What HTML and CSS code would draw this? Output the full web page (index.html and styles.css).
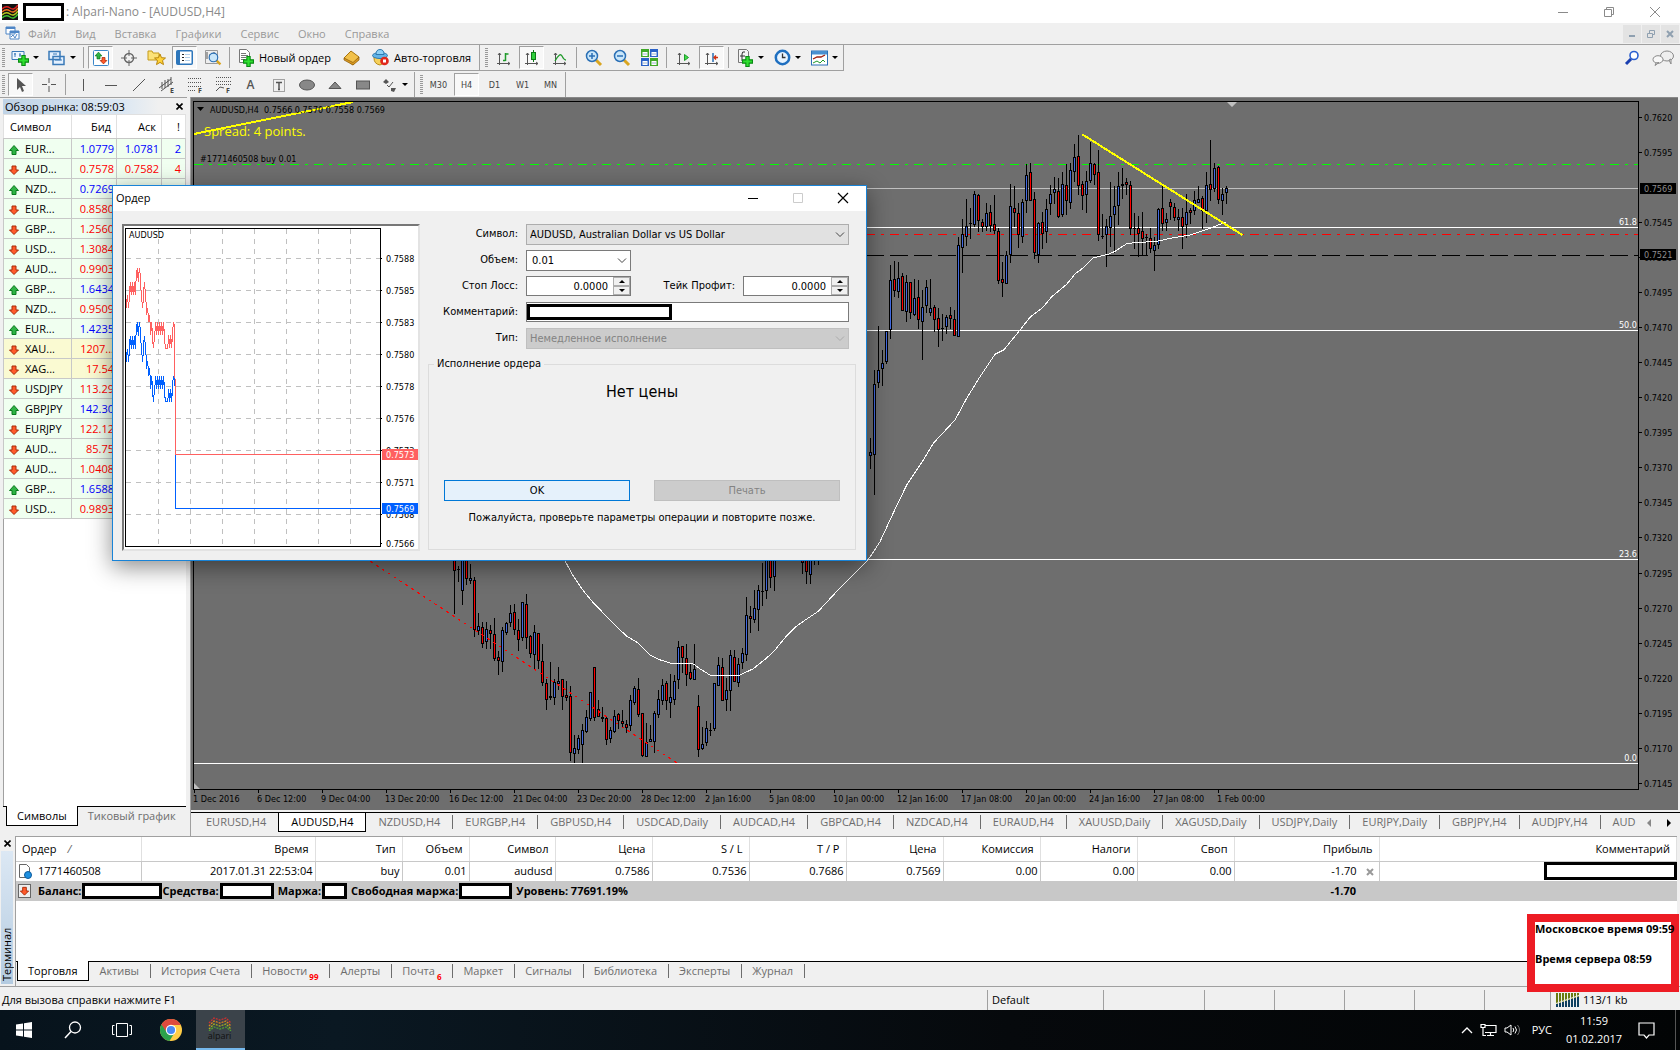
FILE: index.html
```html
<!DOCTYPE html>
<html lang="ru">
<head>
<meta charset="utf-8">
<title>Alpari-Nano - [AUDUSD,H4]</title>
<link rel="stylesheet" href="styles.css">
</head>
<body>
<svg class="sprite" aria-hidden="true">
  <symbol id="up" viewBox="0 0 12 12"><path d="M6 1.500L1.500 6.500H4V10.500H8V6.500H10.500Z" fill="#2fb344" stroke="#0b7a1e"/></symbol>
  <symbol id="down" viewBox="0 0 12 12"><path d="M6 10.500L1.500 6H4V2H8V6H10.500Z" fill="#ff5a2a" stroke="#a82a08"/></symbol>
  <symbol id="plus" viewBox="0 0 10 10"><path d="M3.500.5h3v3h3v3h-3v3h-3v-3h-3v-3h3z" fill="#2fe02f" stroke="#0a8a14"/></symbol>
  <symbol id="axes" viewBox="0 0 16 16"><path d="M3.500 3V15M1 13.500H14M2 5l1.500-2L5 5M12 12l2 1.500L12 15" fill="none" stroke="#555"/></symbol>
  <symbol id="chev" viewBox="0 0 10 6"><path d="M1 .5l4 4 4-4" fill="none" stroke="currentColor"/></symbol>
  <symbol id="lens" viewBox="0 0 18 18"><path d="M11 11l5 5" stroke="#d9a520" stroke-width="3"/><circle cx="7" cy="7" r="5.500" fill="#c9e6fa" stroke="#2a6fb5" stroke-width="1.500"/></symbol>
</svg>

<header class="titlebar">
  <svg width="16" height="16" viewBox="0 0 16 16"><rect width="16" height="16" fill="#111"/><g fill="none" stroke-width="1.500"><path d="M0 5q4-4 8-1t8-3" stroke="#e02020"/><path d="M0 8q4-4 8-1t8-3" stroke="#f07020"/><path d="M0 11q4-4 8-1t8-3" stroke="#b8c820"/><path d="M0 14q4-4 8-1t8-3" stroke="#40c030"/></g></svg>
  <span class="mask mask-title"></span>
  <span class="title">: Alpari-Nano - [AUDUSD,H4]</span>
  <span class="win-controls">
    <button aria-label="Свернуть"><svg width="12" height="12"><path d="M1 6.500h10" stroke="#8a8a8a"/></svg></button>
    <button aria-label="Развернуть"><svg width="12" height="12"><path d="M1.500 3.500h7v7h-7zM3.500 3V1.500h7v7H9" fill="none" stroke="#8a8a8a"/></svg></button>
    <button aria-label="Закрыть"><svg width="12" height="12"><path d="M1 1l10 10M11 1L1 11" stroke="#8a8a8a"/></svg></button>
  </span>
</header>

<nav class="menubar">
  <svg width="15" height="15" viewBox="0 0 15 15"><path d="M1 1h9v7H1zM5 5h9v8H5z" fill="#fff" stroke="#4f86c6"/><path d="M1 2h9M5 6h9" stroke="#4f86c6" stroke-width="2"/><path d="M6 11l2-2 2 3 2-4" fill="none" stroke="#4f86c6"/></svg>
  <a href="#">Файл</a><a href="#">Вид</a><a href="#">Вставка</a><a href="#">Графики</a><a href="#">Сервис</a><a href="#">Окно</a><a href="#">Справка</a>
  <span class="mdi">
    <button aria-label="Свернуть окно"><svg width="8" height="8"><path d="M1 6h6" stroke="#8fa0b0" stroke-width="2"/></svg></button>
    <button aria-label="Восстановить окно"><svg width="8" height="8"><path d="M.5 3.500h5v4h-5zM2.500 3V.5h5v4H6" fill="none" stroke="#8fa0b0"/></svg></button>
    <button aria-label="Закрыть окно"><svg width="8" height="8"><path d="M1 1l6 6M7 1L1 7" stroke="#8fa0b0" stroke-width="2"/></svg></button>
  </span>
</nav>

<div class="toolrow">
  <div class="toolbar">
    <i class="grip"></i>
    <button class="tb drop"><svg width="18" height="18"><path d="M1 2.500h12v8H1z" fill="#eef6ff" stroke="#3a7ab8"/><path d="M4 4v4M3 5h2M9 4v4M8 6h2" stroke="#3a7ab8"/><use href="#plus" x="7" y="6" width="11" height="11"/></svg><b class="car"></b></button>
    <button class="tb drop"><svg width="18" height="18"><path d="M1 2.500h11v8H1zM5 7.500h11v8H5z" fill="#e4f1ff" stroke="#3a7ab8" stroke-width="1.500"/><path d="M7 11h7M5 5h4" stroke="#3a7ab8"/></svg><b class="car"></b></button>
    <i class="sep"></i>
    <button class="tb on"><svg width="16" height="16"><rect x=".5" y=".5" width="15" height="15" rx="1" fill="#fff" stroke="#3a86c8"/><use href="#up" x="1" y="1" width="9" height="9"/><use href="#down" x="6" y="6" width="9" height="9"/></svg></button>
    <button class="tb"><svg width="16" height="16"><circle cx="8" cy="8" r="4.500" fill="none" stroke="#666" stroke-width="1.500"/><path d="M8 0v6M8 10v6M0 8h6M10 8h6" stroke="#666"/></svg></button>
    <button class="tb"><svg width="19" height="17"><path d="M1 2h4l1 2h6v7H1z" fill="#fce277" stroke="#c49a1a"/><path d="M13 5l1.500 3.700 4 .3-3 2.600 1 4-3.500-2.200L9.500 15.600l1-4-3-2.600 4-.3z" fill="#ffd23a" stroke="#b8860b"/></svg></button>
    <button class="tb on"><svg width="17" height="16"><rect x=".75" y=".75" width="15.500" height="13.500" rx="1" fill="#fff" stroke="#2d76bb" stroke-width="1.500"/><rect x="1" y="1" width="3" height="13" fill="#2d76bb"/><path d="M6 4.500h2M6 7.500h2M6 10.500h2" stroke="#222"/><path d="M9 4.500h5M9 7.500h5M9 10.500h5" stroke="#b4d0ea"/></svg></button>
    <button class="tb"><svg width="18" height="18"><path d="M1.500 1.500h12v13h-12z" fill="#eee" stroke="#999"/><path d="M3 3v7M6 5v5M10 3v3" stroke="#555"/><use href="#lens" x="4" y="3" width="14" height="14"/></svg></button>
    <i class="sep"></i>
    <button class="tb wide"><svg width="17" height="18"><path d="M1.500.5h7l3 3v10h-10z" fill="#fff" stroke="#777"/><path d="M3 4.500h5M3 6.500h7M3 8.500h5M3 10.500h4" stroke="#777"/><use href="#plus" x="5" y="7" width="11" height="11"/></svg>Новый ордер</button>
    <button class="tb"><svg width="18" height="16"><path d="M1 8l7-7 8 6-6 8z" fill="#f2c14a" stroke="#a8740c"/><path d="M1 8l9 4.500 6-5.500v3l-6 5-9-5z" fill="#d99a22" stroke="#8a5a0a" stroke-width=".7"/></svg></button>
    <button class="tb wide"><svg width="18" height="17"><path d="M2 9q0 6 6 7l6-3V8H2z" fill="#f5d05a" stroke="#b88c1a"/><ellipse cx="8" cy="6.500" rx="7.500" ry="3" fill="#62b4e8" stroke="#2d79b0"/><path d="M4 5.500q0-5 4-5t4 5z" fill="#8fd0f5" stroke="#2d79b0"/><circle cx="12.500" cy="12" r="4.300" fill="#e0281c"/><rect x="11" y="10.500" width="3" height="3" fill="#fff"/></svg>Авто-торговля</button>
  </div>
  <div class="toolbar">
    <i class="grip"></i>
    <button class="tb"><svg width="16" height="16"><use href="#axes" width="16" height="16"/><path d="M9.500 3v8M9.500 4h3M7 10.500h2.500" stroke="#1f9a2a" stroke-width="1.500"/></svg></button>
    <button class="tb on"><svg width="16" height="16"><use href="#axes" width="16" height="16"/><path d="M9.500 0v12" stroke="#0e7a18"/><rect x="7.500" y="2.500" width="4" height="7" fill="#2fd03c" stroke="#0e7a18"/></svg></button>
    <button class="tb"><svg width="16" height="16"><use href="#axes" width="16" height="16"/><path d="M3 11q5-9 7-5t4 4" fill="none" stroke="#1f9a2a" stroke-width="1.300"/></svg></button>
    <i class="sep"></i>
    <button class="tb"><svg width="18" height="18"><use href="#lens" width="18" height="18"/><path d="M4 7h6M7 4v6" stroke="#2a6fb5" stroke-width="1.500"/></svg></button>
    <button class="tb"><svg width="18" height="18"><use href="#lens" width="18" height="18"/><path d="M4 7h6" stroke="#2a6fb5" stroke-width="1.500"/></svg></button>
    <button class="tb"><svg width="17" height="17"><path d="M0 0h8v8H0zM9 9h8v8H9z" fill="#3fa828"/><path d="M9 0h8v8H9zM0 9h8v8H0z" fill="#2a62c8"/><path d="M1.500 3h5v4h-5zM10.500 3h5v4h-5zM1.500 12h5v4h-5zM10.500 12h5v4h-5z" fill="#fff"/><path d="M2 5h4M11 5h4M2 14h4M11 14h4" stroke="#9cb4d0"/></svg></button>
    <i class="sep"></i>
    <button class="tb"><svg width="16" height="16"><use href="#axes" width="16" height="16"/><path d="M8.500 4.500v6l4-3z" fill="#3fe04a" stroke="#1f9a2a"/></svg></button>
    <button class="tb on"><svg width="16" height="16"><use href="#axes" width="16" height="16"/><path d="M9 3v9" stroke="#2a6fb5" stroke-width="1.500"/><path d="M14 7.500h-4M12 5.500l-2 2 2 2" fill="none" stroke="#d03010" stroke-width="1.300"/></svg></button>
    <i class="sep"></i>
    <button class="tb drop"><svg width="17" height="18"><path d="M1.500.5h8l2 2v11h-10z" fill="#f4f4f4" stroke="#777"/><path d="M8 3q-3-1-3 2v7M3 7h5" fill="none" stroke="#333"/><use href="#plus" x="5" y="7" width="11" height="11"/></svg><b class="car"></b></button>
    <button class="tb drop"><svg width="17" height="17"><circle cx="8.500" cy="8.500" r="6.700" fill="#e8f4ff" stroke="#1e6fc0" stroke-width="2.500"/><path d="M8.500 4.500v4h3" fill="none" stroke="#333" stroke-width="1.300"/></svg><b class="car"></b></button>
    <button class="tb drop"><svg width="17" height="16"><rect x=".5" y="1" width="16" height="14" fill="#fff" stroke="#2a6fb5"/><rect x="1" y="1" width="15" height="3.500" fill="#4a90d0"/><path d="M2 9l4-2h4l4-2" fill="none" stroke="#a02010" stroke-width="1.300"/><path d="M2 13l4-2 3 2 3-3 2 2" fill="none" stroke="#1f9a2a"/></svg><b class="car"></b></button>
  </div>
  <div class="right-tools">
    <button aria-label="Поиск"><svg width="16" height="16"><circle cx="10" cy="5.500" r="4" fill="#fff" stroke="#2a5fd0" stroke-width="1.600"/><path d="M7 9l-5 5" stroke="#1a3fb0" stroke-width="3"/></svg></button>
    <button aria-label="Чат"><svg width="22" height="16"><ellipse cx="15" cy="6" rx="6.500" ry="5" fill="#eee" stroke="#888"/><path d="M17 10l2 4 0-5z" fill="#eee" stroke="#888"/><ellipse cx="6" cy="9.500" rx="5" ry="3.800" fill="#f8f8f8" stroke="#888"/><path d="M4 13l-1 2.500 4-3z" fill="#f8f8f8" stroke="#888"/></svg></button>
  </div>
</div>

<div class="toolrow second">
  <div class="toolbar">
    <i class="grip"></i>
    <button class="tb on"><svg width="14" height="16"><path d="M3 1v12l3-3 2 5 2-1-2-5h4z" fill="#555"/></svg></button>
    <button class="tb"><svg width="16" height="16"><path d="M8 1v5M8 9v6M1 7.500h5M10 7.500h5" stroke="#555"/></svg></button>
    <i class="sep"></i>
    <button class="tb"><svg width="16" height="16"><path d="M8.500 2v12" stroke="#555"/></svg></button>
    <button class="tb"><svg width="16" height="16"><path d="M2 8.500h12" stroke="#555"/></svg></button>
    <button class="tb"><svg width="16" height="16"><path d="M2 14L14 2" stroke="#555"/></svg></button>
    <button class="tb"><svg width="18" height="18"><path d="M1 12L13 3M3 15L15 6M4 6v7M7 4v8M10 3v8M13 1v8" stroke="#555"/><text x="12" y="17">E</text></svg></button>
    <button class="tb"><svg width="18" height="18"><path d="M2 2.500h13M2 6.500h13M2 10.500h13M2 14.500h8" stroke="#555" stroke-dasharray="1 1"/><text x="12" y="17">F</text></svg></button>
    <button class="tb"><svg width="18" height="18"><path d="M2 1.500h15M2 5.500h15M2 8.500h15" stroke="#555" stroke-dasharray="1 1"/><path d="M2 15l4-4 4 1" fill="none" stroke="#555"/><text x="12" y="17">F</text></svg></button>
    <button class="tb letter">A</button>
    <button class="tb"><svg width="16" height="16"><rect x="2.500" y="2.500" width="11" height="12" fill="none" stroke="#555" stroke-dasharray="1 1"/><path d="M5 5.500h6M8 5v7M7 12.500h2" stroke="#555" stroke-width="1.500"/></svg></button>
    <button class="tb"><svg width="16" height="16"><ellipse cx="8" cy="8" rx="7.500" ry="5" fill="#888" stroke="#555"/></svg></button>
    <button class="tb"><svg width="16" height="16"><path d="M2 11.500L8 5l6 6.500z" fill="#888" stroke="#555"/></svg></button>
    <button class="tb"><svg width="16" height="16"><rect x="1.500" y="4" width="13" height="8" fill="#888" stroke="#555"/></svg></button>
    <button class="tb drop"><svg width="16" height="16"><path d="M1 5l3-3 3 3-3 2zM9 11l5 0-2 4-3-1z" fill="#555"/><path d="M5 8l2 2 4-5" fill="none" stroke="#555"/></svg><b class="car"></b></button>
  </div>
  <div class="toolbar periods">
    <i class="grip"></i>
    <button class="tb">M30</button><button class="tb on">H4</button><button class="tb">D1</button><button class="tb">W1</button><button class="tb">MN</button>
  </div>
</div>

<main class="main">
  <aside class="market">
    <div class="panel-title"><span>Обзор рынка: 08:59:03</span><button aria-label="Закрыть панель"><svg width="7" height="7"><path d="M.5.5l6 6M6.500.5l-6 6" stroke="#000" stroke-width="1.600"/></svg></button></div>
    <table class="quotes">
      <colgroup><col class="q-sym"><col class="q-num"><col class="q-num"><col></colgroup>
      <thead><tr><th class="l">Символ</th><th>Бид</th><th>Аск</th><th>!</th></tr></thead>
      <tbody>
      <tr class="u"><td class="l"><svg><use href="#up"/></svg>EUR...</td><td>1.0779</td><td>1.0781</td><td>2</td></tr>
      <tr class="d"><td class="l"><svg><use href="#down"/></svg>AUD...</td><td>0.7578</td><td>0.7582</td><td>4</td></tr>
      <tr class="u"><td class="l"><svg><use href="#up"/></svg>NZD...</td><td>0.7269</td><td>0.7273</td><td>4</td></tr>
      <tr class="d"><td class="l"><svg><use href="#down"/></svg>EUR...</td><td>0.8580</td><td></td><td></td></tr>
      <tr class="d"><td class="l"><svg><use href="#down"/></svg>GBP...</td><td>1.2560</td><td></td><td></td></tr>
      <tr class="d"><td class="l"><svg><use href="#down"/></svg>USD...</td><td>1.3084</td><td></td><td></td></tr>
      <tr class="d"><td class="l"><svg><use href="#down"/></svg>AUD...</td><td>0.9903</td><td></td><td></td></tr>
      <tr class="u"><td class="l"><svg><use href="#up"/></svg>GBP...</td><td>1.6434</td><td></td><td></td></tr>
      <tr class="d"><td class="l"><svg><use href="#down"/></svg>NZD...</td><td>0.9509</td><td></td><td></td></tr>
      <tr class="u"><td class="l"><svg><use href="#up"/></svg>EUR...</td><td>1.4235</td><td></td><td></td></tr>
      <tr class="d metal"><td class="l"><svg><use href="#down"/></svg>XAU...</td><td>1207...</td><td></td><td></td></tr>
      <tr class="d metal"><td class="l"><svg><use href="#down"/></svg>XAG...</td><td>17.54</td><td></td><td></td></tr>
      <tr class="d"><td class="l"><svg><use href="#down"/></svg>USDJPY</td><td>113.29</td><td></td><td></td></tr>
      <tr class="u"><td class="l"><svg><use href="#up"/></svg>GBPJPY</td><td>142.30</td><td></td><td></td></tr>
      <tr class="d"><td class="l"><svg><use href="#down"/></svg>EURJPY</td><td>122.12</td><td></td><td></td></tr>
      <tr class="d"><td class="l"><svg><use href="#down"/></svg>AUD...</td><td>85.75</td><td></td><td></td></tr>
      <tr class="d"><td class="l"><svg><use href="#down"/></svg>AUD...</td><td>1.0408</td><td></td><td></td></tr>
      <tr class="u"><td class="l"><svg><use href="#up"/></svg>GBP...</td><td>1.6588</td><td></td><td></td></tr>
      <tr class="d"><td class="l"><svg><use href="#down"/></svg>USD...</td><td>0.9893</td><td></td><td></td></tr>
      </tbody>
    </table>
    <div class="filler"></div>
    <div class="tabs market-tabs"><button class="tab active">Символы</button><button class="tab">Тиковый график</button></div>
  </aside>
  <section class="workspace">
    <div class="chart">
      <svg class="plot" id="plot"></svg>
      <svg class="prices" id="prices"></svg>
      <svg class="times" id="times"></svg>
    </div>
    <div class="tabs chart-tabs">
      <button class="tab">EURUSD,H4</button><button class="tab active">AUDUSD,H4</button><button class="tab">NZDUSD,H4</button><button class="tab">EURGBP,H4</button><button class="tab">GBPUSD,H4</button><button class="tab">USDCAD,Daily</button><button class="tab">AUDCAD,H4</button><button class="tab">GBPCAD,H4</button><button class="tab">NZDCAD,H4</button><button class="tab">EURAUD,H4</button><button class="tab">XAUUSD,Daily</button><button class="tab">XAGUSD,Daily</button><button class="tab">USDJPY,Daily</button><button class="tab">EURJPY,Daily</button><button class="tab">GBPJPY,H4</button><button class="tab">AUDJPY,H4</button><button class="tab">AUD</button>
      <span class="scroll"><svg width="5" height="8"><path d="M4 0v8L0 4z" fill="#888"/></svg><svg width="5" height="8"><path d="M1 0v8l4-4z"/></svg></span>
    </div>
  </section>
</main>

<section class="terminal">
  <div class="strip"><button aria-label="Закрыть терминал"><svg width="7" height="7"><path d="M.5.5l6 6M6.500.5l-6 6" stroke="#000" stroke-width="1.600"/></svg></button><span>Терминал</span></div>
  <div class="term-body">
    <table class="orders">
      <colgroup><col class="c125"><col class="c174"><col class="c87"><col class="c67"><col class="c86"><col class="c97"><col class="c97"><col class="c97"><col class="c97"><col class="c97"><col class="c97"><col class="c97"><col class="c145"><col></colgroup>
      <thead><tr><th class="l">Ордер <i class="slash">/</i></th><th>Время</th><th>Тип</th><th>Объем</th><th>Символ</th><th>Цена</th><th>S / L</th><th>T / P</th><th>Цена</th><th>Комиссия</th><th>Налоги</th><th>Своп</th><th>Прибыль</th><th>Комментарий</th></tr></thead>
      <tbody>
        <tr><td class="l"><svg width="14" height="16"><path d="M1.500 1.500h7l3 3v10h-10z" fill="#fff" stroke="#666"/><circle cx="10" cy="12" r="3.500" fill="#1e90e0" stroke="#0c5a9c"/></svg>1771460508</td><td>2017.01.31 22:53:04</td><td>buy</td><td>0.01</td><td>audusd</td><td>0.7586</td><td>0.7536</td><td>0.7686</td><td>0.7569</td><td>0.00</td><td>0.00</td><td>0.00</td><td class="profit">-1.70 <button aria-label="Закрыть ордер"><svg width="8" height="8"><path d="M1 1l6 6M7 1L1 7" stroke="#999" stroke-width="2"/></svg></button></td><td class="comment"><span class="mask"></span></td></tr>
        <tr class="total"><td colspan="12"><div class="sum"><svg width="13" height="15"><rect x=".5" y=".5" width="12" height="13" fill="#eee" stroke="#666"/><use href="#down" x="1" y="1" width="11" height="12"/></svg><span>Баланс:</span><i class="mask m80"></i><span>Средства:</span><i class="mask m54"></i><span class="gap">Маржа:</span><i class="mask m25"></i><span class="gap">Свободная маржа:</span><i class="mask m53"></i><span class="gap">Уровень: 77691.19%</span></div></td><td class="profit">-1.70</td><td></td></tr>
      </tbody>
    </table>
    <div class="tabs term-tabs">
      <button class="tab active">Торговля</button><button class="tab">Активы</button><button class="tab">История Счета</button><button class="tab">Новости<sub>99</sub></button><button class="tab">Алерты</button><button class="tab">Почта<sub>6</sub></button><button class="tab">Маркет</button><button class="tab">Сигналы</button><button class="tab">Библиотека</button><button class="tab">Эксперты</button><button class="tab">Журнал</button>
    </div>
  </div>
</section>

<footer class="status">
  <span class="hint">Для вызова справки нажмите F1</span><span class="s116">Default</span><span class="s101"></span><span class="s70"></span><span class="s70"></span><span class="s70"></span><span class="s70"></span><span class="s66"></span>
  <span class="net"><svg width="23" height="14"><path d="M1 0v14M4 0v14M7 0v14M10 0v14M13 0v14M16 0v14M19 0v14M22 0v14" stroke="#6b7a10" stroke-width="2"/><path d="M1 11v3M4 10v4M7 9v5M10 8v6M13 7v7M16 6v8M19 5v9M22 4v10" stroke="#0f4060" stroke-width="2"/><path d="M0 10.500L23 2.500" stroke="#f0f0f0"/></svg>113/1 kb</span>
</footer>

<div class="taskbar">
  <button aria-label="Пуск"><svg width="16" height="16"><path d="M0 2.500L7 1.500V7.500H0zM8 1.300L16 0V7.500H8zM0 8.500h7v6L0 13.500zM8 8.500h8V16L8 14.700z" fill="#fff"/></svg></button>
  <button aria-label="Поиск"><svg width="18" height="18"><circle cx="11" cy="6.500" r="5.500" fill="none" stroke="#fff" stroke-width="1.300"/><path d="M7 10.500L1 17" stroke="#fff" stroke-width="1.500"/></svg></button>
  <button aria-label="Представление задач"><svg width="20" height="16"><path d="M4.500 1.500h11v13h-11zM2.500 3.500h-2v9h2M17.500 3.500h2v9h-2" fill="none" stroke="#fff"/></svg></button>
  <button aria-label="Chrome"><svg width="22" height="22" viewBox="0 0 22 22"><circle cx="11" cy="11" r="11" fill="#ffcd46"/><path d="M11 11L1.500 5.500A11 11 0 0 0 9.500 22L15 13z" fill="#2ba24c"/><path d="M11 6h9.800A11 11 0 0 0 1.500 5.500L6.500 13z" fill="#dd4b3e"/><circle cx="11" cy="11" r="5.200" fill="#fff"/><circle cx="11" cy="11" r="4.100" fill="#4a8af4"/></svg></button>
  <button class="running"><svg width="24" height="14"><g fill="none" stroke-width="1.300" stroke-dasharray="2 1"><path d="M1 6L6 1l6 2 6-2 5 5" stroke="#d03030"/><path d="M1 9l5-5 6 2 6-2 5 5" stroke="#e08020"/><path d="M1 12l5-5 6 2 6-2 5 5" stroke="#a8b020"/><path d="M1 14l5-4 6 2 6-2 5 4" stroke="#50a030"/></g></svg><span>alpari</span></button>
  <div class="tray">
    <svg width="12" height="8"><path d="M1 7l5-5 5 5" fill="none" stroke="#fff" stroke-width="1.300"/></svg>
    <svg width="17" height="14"><path d="M5 2.500h11v7H5M10.500 10v2M7 12.500h7M1 1.500h4v3H1zM3 5v7.500h3" fill="none" stroke="#fff" stroke-width="1.200"/></svg>
    <svg width="17" height="14"><path d="M1 5h2l4-3v10L3 9H1z" fill="none" stroke="#fff"/><path d="M9 5q1.500 2 0 4M11 3.500q3 3.500 0 7" fill="none" stroke="#fff"/><path d="M13.500 2q4 5 0 10" fill="none" stroke="#777"/></svg>
    <span class="lang">РУС</span>
    <span class="clock">11:59<br>01.02.2017</span>
    <svg width="17" height="17"><path d="M1 1h15v12H11l-2.500 3L6 13H1z" fill="none" stroke="#fff" stroke-width="1.200"/></svg>
    <i class="desk"></i>
  </div>
</div>

<div class="note"><p>Московское время 09:59</p><p>Время сервера 08:59</p></div>

<section class="dialog" role="dialog" aria-label="Ордер">
  <header><span>Ордер</span>
    <span class="dlg-controls"><button aria-label="Свернуть"><svg width="12" height="12"><path d="M1 6.500h10" stroke="#000"/></svg></button><button aria-label="Развернуть" disabled><svg width="12" height="12"><path d="M1.500 1.500h9v9h-9z" fill="none" stroke="#ccc"/></svg></button><button aria-label="Закрыть"><svg width="12" height="12"><path d="M1 1l10 10M11 1L1 11" stroke="#000" stroke-width="1.200"/></svg></button></span>
  </header>
  <div class="dlg-body">
    <div class="tick"><svg id="tick" width="294" height="323"></svg></div>
    <form class="form">
      <label for="sym">Символ:</label><span class="combo full"><select id="sym"><option>AUDUSD, Australian Dollar vs US Dollar</option></select><svg><use href="#chev"/></svg></span>
      <label for="vol">Объем:</label><span class="combo short white"><select id="vol"><option>0.01</option></select><svg><use href="#chev"/></svg></span>
      <label for="sl">Стоп Лосс:</label><span class="spin"><input id="sl" value="0.0000"><span class="arrows"><button type="button" aria-label="Больше"><i class="tri up"></i></button><button type="button" aria-label="Меньше"><i class="tri"></i></button></span></span><label for="tp" class="second-label">Тейк Профит:</label><span class="spin"><input id="tp" value="0.0000"><span class="arrows"><button type="button" aria-label="Больше"><i class="tri up"></i></button><button type="button" aria-label="Меньше"><i class="tri"></i></button></span></span>
      <label for="com">Комментарий:</label><span class="field full"><i class="mask"></i><input id="com"></span>
      <label for="typ">Тип:</label><span class="combo full"><select id="typ" disabled><option>Немедленное исполнение</option></select><svg><use href="#chev"/></svg></span>
      <fieldset><legend>Исполнение ордера</legend>
        <p class="big">Нет цены</p>
        <div class="actions"><button type="button" class="ok">OK</button><button type="button" disabled>Печать</button></div>
        <p>Пожалуйста, проверьте параметры операции и повторите позже.</p>
      </fieldset>
    </form>
  </div>
</section>
<script src="chart.js"></script>
</body>
</html>
```
FILE: styles.css
```css
* { box-sizing: border-box; }
body {
  margin: 0;
  min-height: 100vh;
  display: flex;
  flex-direction: column;
  position: relative;
  overflow: hidden;
  background: #f0f0f0;
  color: #000;
  font: 11px/14px "Open Sans", "Noto Sans", sans-serif;
}
button { border: 0; padding: 0; margin: 0; background: none; font: inherit; color: inherit; display: flex; align-items: center; justify-content: center; }
a { color: inherit; text-decoration: none; }
p { margin: 0; }
svg { display: block; flex: none; }
table { border-collapse: collapse; table-layout: fixed; width: 100%; }
.sprite { position: absolute; width: 0; height: 0; }
.mask { display: block; flex: none; background: #fff; border: 3px solid #000; height: 16px; }

.titlebar { height: 23px; background: #fff; display: flex; align-items: center; padding: 1px 19px 0 2px; }
.mask-title { width: 41px; height: 18px; margin-left: 5px; }
.title { color: #8a8a8a; font-size: 12px; margin-left: 2px; }
.win-controls { margin-left: auto; display: flex; gap: 34px; }

.menubar { height: 21px; display: flex; align-items: center; gap: 19px; padding: 0 1px 0 5px; color: #999; }
.menubar svg + a { margin-left: -11px; }
.mdi { margin-left: auto; display: flex; gap: 1px; }
.mdi button { width: 18px; height: 18px; background: #e3e3e3; }

.toolrow { height: 27px; border-top: 1px solid #a0a0a0; display: flex; }
.toolrow.second { height: 26px; border-top: 0; padding-top: 1px; }
.toolbar { display: flex; align-items: center; gap: 3px; padding: 0 2px; border-right: 1px solid #a0a0a0; border-bottom: 1px solid #a0a0a0; }
.toolbar + .toolbar { padding-left: 5px; }
.second .toolbar { border-bottom: 0; }
.grip { width: 3px; height: 19px; background: repeating-linear-gradient(#999 0 1px, #f0f0f0 1px 2px); }
.sep { width: 1px; height: 21px; background: #a0a0a0; margin: 0 1px; }
.tb { width: 25px; height: 23px; flex: none; gap: 3px; }
.tb.drop { width: 34px; gap: 4px; }
.tb.wide { width: auto; padding: 0 6px 0 4px; gap: 4px; }
.tb.on { background: #f8f8f8; border: 1px solid; border-color: #a0a0a0 #fff #fff #a0a0a0; }
.tb.letter { font-size: 12px; color: #555; font-weight: 600; }
.tb text { font-size: 7px; font-weight: 700; fill: #444; }
.car { border: 3px solid transparent; border-top: 3px solid #000; border-bottom: 0; }
.periods { font-size: 9px; color: #444; font-family: "DejaVu Sans Condensed", sans-serif; }
.right-tools { margin-left: auto; display: flex; align-items: center; gap: 12px; padding-right: 6px; }

.main { flex: 1; display: flex; }
.market { width: 187px; flex: none; display: flex; flex-direction: column; border-top: 1px solid #a0a0a0; margin-right: 3px; padding: 1px 1px 10px 3px; }
.panel-title { height: 15px; display: flex; align-items: center; justify-content: space-between; padding: 0 3px 0 2px; background: linear-gradient(90deg, #bfd3e6, #dbe7f3 65%, #f0f0f0 85%); }
.quotes { background: #fff; flex: none; }
.quotes th { height: 24px; border: 1px solid #e0e0e0; border-bottom-color: #c8c8c8; font-weight: 400; text-align: right; padding: 0 5px; }
.quotes .l { text-align: left; }
.quotes th.l { padding-left: 6px; }
.quotes td { height: 20px; border: 1px solid #c8c8c8; text-align: right; padding: 0 2px; background: #f0fff0; overflow: hidden; white-space: nowrap; }
.quotes td:last-child { padding-right: 4px; }
.quotes td svg { display: inline-block; width: 12px; height: 12px; margin: 0 5px 0 1px; vertical-align: -3px; }
.quotes td.l { padding-left: 3px; color: #000; }
.quotes .u td:not(.l) { color: #00f; }
.quotes .d td:not(.l) { color: #f00; }
.quotes .metal td { background: #fafad2; }
.q-sym { width: 68px; }
.q-num { width: 45px; }
.filler { flex: 1; background: #fff; border-left: 1px solid #a0a0a0; }

.tabs { display: flex; height: 20px; border-top: 1px solid #000; background: #f0f0f0; }
.tab { color: #6d6d6d; white-space: nowrap; flex: none; }
.tab.active { background: #fff; color: #000; border: 1px solid #000; border-top: 0; margin-top: -1px; padding-top: 1px; }
.tab:not(.active) { border-right: 1px solid #6d6d6d; height: 14px; margin-top: 2px; }
.market-tabs .tab { padding: 0 10px; border-right: 0; }
.market-tabs .tab.active { margin-left: 3px; border-right: 1px solid #000; }

.workspace { flex: 1; min-width: 0; display: flex; flex-direction: column; border-left: 1px solid #a0a0a0; }
.chart { flex: 1; display: grid; grid-template-columns: minmax(0, 1fr) 39px; grid-template-rows: minmax(0, 1fr) 20px; background: #6e6e6e; border-top: 1px solid #888; padding: 3px 0 0 2px; margin-right: 2px; font: 9px/11px "DejaVu Sans Condensed", sans-serif; }
.plot { width: 100%; height: 100%; border: 1px solid #000; }
.prices, .times { width: 100%; height: 100%; overflow: visible; }
.times { grid-column: 1 / 3; }
.chart-tabs { margin-top: 2px; height: 24px; border-bottom: 4px solid #f0f0f0; overflow: hidden; }
.chart-tabs .tab { padding: 0 12px; }
.chart-tabs .tab:first-child { border-right: 0; padding-left: 15px; }
.chart-tabs .tab:nth-last-child(2) { border-right: 0; padding-right: 0; }
.scroll { margin-left: auto; display: flex; gap: 14px; align-items: center; padding-right: 9px; }

.terminal { display: flex; height: 150px; }
.strip { width: 15px; display: flex; flex-direction: column; align-items: center; padding: 4px 2px 2px 1px; gap: 4px; }
.strip span { flex: 1; width: 100%; writing-mode: vertical-rl; transform: rotate(180deg); background: linear-gradient(#b4cbe0, #dce8f4); padding-top: 3px; display: flex; align-items: center; line-height: 12px; }
.term-body { flex: 1; min-width: 0; margin-right: 3px; border: 1px solid #a0a0a0; border-bottom: 0; border-right: 0; background: #fff; display: flex; flex-direction: column; }
.orders th { height: 24px; font-weight: 400; text-align: right; padding: 0 6px; border-right: 1px solid #e0e0e0; border-bottom: 1px solid #c8c8c8; }
.orders td { height: 20px; text-align: right; padding: 0 2px; border-right: 1px solid #c8c8c8; white-space: nowrap; }
.orders .l { text-align: left; }
.slash { color: #666; margin-left: 8px; }
.orders td.l svg { display: inline-block; vertical-align: -4px; margin-right: 6px; }
.orders .profit { padding-right: 22px; position: relative; }
.profit button { position: absolute; right: 5px; top: 6px; }
.orders .comment { padding: 0; border: 0; }
.comment .mask { width: 133px; height: 18px; margin-left: auto; }
.orders .total td { background: #c8c8c8; border: 0; font-weight: 700; }
.orders .total td.profit { padding-right: 23px; }
.sum { display: flex; align-items: center; }
.sum svg { margin-right: 7px; }
.sum .gap { margin-left: 4px; }
.sum span + .mask { margin-left: 1px; }
.m80 { width: 80px; } .m54 { width: 54px; } .m25 { width: 25px; } .m53 { width: 53px; }
.c125 { width: 125px; } .c174 { width: 174px; } .c87 { width: 87px; } .c67 { width: 67px; } .c86 { width: 86px; } .c97 { width: 97px; } .c145 { width: 145px; }
.term-tabs { margin-top: auto; height: 25px; border-bottom: 5px solid #f0f0f0; padding-left: 1px; }
.term-tabs .tab { padding: 0 11px 0 10px; }
sub { color: #f00; font-size: 8px; line-height: 8px; font-weight: 700; align-self: flex-end; margin: 0 0 -3px 2px; }

.status { height: 24px; border-top: 1px solid #a0a0a0; display: flex; padding-top: 3px; }
.status span { border-left: 1px solid #a0a0a0; padding: 3px 4px 0; }
.status .hint { flex: 1; border: 0; padding-left: 2px; }
.s116 { width: 116px; } .s101 { width: 101px; } .s70 { width: 70px; } .s66 { width: 66px; }
.status .net { width: 130px; display: flex; gap: 4px; padding-left: 5px; }

.taskbar { height: 40px; background: linear-gradient(90deg, #07131c, #0a1822 20%, #06090c 60%, #020405); color: #fff; display: flex; }
.taskbar button { width: 49px; flex: none; padding-right: 2px; }
.taskbar .running { flex-direction: column; background: #3b434a; border-bottom: 2px solid #76b9ed; color: #111; font-size: 9px; line-height: 10px; }
.tray { margin-left: auto; display: flex; align-items: center; gap: 7px; }
.lang { margin: 0 2px 0 4px; }
.clock { text-align: center; line-height: 18px; width: 66px; }
.clock + svg { margin: 0 13px 0 4px; }
.desk { width: 5px; height: 40px; border-left: 1px solid #555; }

.note { position: absolute; right: 1px; bottom: 58px; width: 152px; height: 78px; border: 8px solid #ed1c24; background: #fff; font-weight: 700; white-space: nowrap; display: flex; flex-direction: column; gap: 16px; }

.dialog { position: absolute; left: 112px; top: 185px; width: 755px; border: 1px solid #1883d7; background: #f0f0f0; box-shadow: 0 6px 22px rgba(0, 0, 0, .45); font: 11px/14px "DejaVu Sans Condensed", "DejaVu Sans", sans-serif; }
.dialog header { height: 25px; background: #fff; display: flex; align-items: center; justify-content: space-between; padding: 0 17px 2px 3px; font: 11px/14px "Open Sans", sans-serif; }
.dlg-controls { display: flex; gap: 33px; }
.dlg-body { display: flex; gap: 8px; padding: 13px 10px 9px 9px; }
.tick { width: 298px; height: 327px; border: 2px solid; border-color: #777 #e3e3e3 #e3e3e3 #777; background: #fff; flex: none; font-size: 9px; }
.form { flex: 1; min-width: 0; display: grid; grid-template-columns: 98px 105px 112px 106px 1fr; grid-template-rows: repeat(5, 26px) 1fr; align-items: start; }
.form label { grid-column: 1; text-align: right; padding: 3px 8px 0 0; white-space: nowrap; }
.form .second-label { grid-column: 3; }
.form .full { grid-column: 2 / 5; }
.combo { display: grid; height: 21px; align-items: center; color: #444; }
.combo select, .combo svg { grid-area: 1 / 1; }
.combo svg { width: 10px; height: 6px; justify-self: end; margin-right: 4px; pointer-events: none; }
select, input { appearance: none; font: inherit; color: #000; margin: 0; border: 1px solid #adadad; background: #e1e1e1; height: 21px; width: 100%; padding: 0 3px; border-radius: 0; }
select:disabled { background: #ccc; border-color: #bfbfbf; color: #838383; opacity: 1; }
.white select { background: #fff; border-color: #7a7a7a; padding-left: 5px; }
.combo:has(:disabled) { color: #aaa; }
.spin { display: flex; height: 20px; border: 1px solid #7a7a7a; background: #fff; }
.spin input { border: 0; background: none; text-align: right; height: 18px; flex: 1; min-width: 0; padding-right: 5px; }
.arrows { width: 17px; display: grid; grid-template-rows: 9px 9px; background: #f0f0f0; }
.arrows button { border: 1px solid #adadad; }
.tri { border: 3px solid transparent; border-top-color: #000; border-bottom: 0; }
.tri.up { border-top: 0; border-bottom: 3px solid #000; }
.field { display: flex; height: 20px; border: 1px solid #7a7a7a; background: #fff; padding: 1px 0; }
.field .mask { width: 145px; }
.field input { border: 0; background: none; height: 16px; flex: 1; min-width: 0; }
fieldset { grid-column: 1 / 6; margin: 3px 0 0; border: 1px solid #dcdcdc; padding: 0 15px; display: flex; flex-direction: column; text-align: center; min-width: 0; height: 193px; }
legend { padding: 0 3px; margin-left: -10px; text-align: left; }
.big { font-size: 16px; line-height: 20px; margin-top: 11px; }
.actions { display: grid; grid-template-columns: 1fr 1fr; gap: 24px; margin: 78px 0 10px; }
.actions button { height: 21px; border: 1px solid #bfbfbf; background: #ccc; color: #838383; }
.actions .ok { border-color: #0078d7; background: #e5f1fb; color: #000; }
```
FILE: chart.js
```js
// Candle rows: x, high, low, body top, body bottom, colour (b up, r down, k flat).
// Values are thirds of a pixel, measured from the given origin.
const sets = [
  [860, 95, `31 1030 1121 1072 1082 b;43 825 1199 868 1080 b;55 693 878 826 864 b;67 766 872 805 822 b;79 708 806 708 801 b;91 511 731 556 706 b;103 499 605 553 587 r;115 501 608 549 590 b;127 535 648 543 647 r;139 540 681 561 651 b;151 562 672 562 653 r;163 553 662 609 660 b;175 556 702 606 675 r;187 585 795 637 681 b;199 556 654 577 632 b;211 553 662 640 654 b;223 631 711 637 674 r;235 640 755 669 704 r;247 657 738 700 702 k;259 660 717 667 696 b;271 635 702 661 671 r;283 645 722 672 722 r;295 427 726 451 725 b;307 373 534 418 459 b;319 312 454 393 426 b;331 339 432 385 388 k;343 288 396 297 390 b;355 297 411 300 378 r;367 373 411 381 396 r;379 324 408 354 396 b;391 330 411 351 393 r;403 300 416 387 408 r;415 399 567 408 558 r;427 501 605 552 564 r;439 468 566 480 566 b;451 267 504 333 480 b;463 273 396 339 354 r;475 324 459 354 419 r;487 312 444 321 426 b;499 207 354 240 318 b;511 204 318 231 318 r;523 291 492 312 474 r;535 381 504 384 480 b;547 351 462 381 417 r;559 312 444 342 410 b;571 270 360 297 327 b;583 246 327 282 294 b;595 249 369 288 366 r;607 231 366 267 360 b;619 207 360 270 318 r;631 204 342 225 324 b;643 147 261 186 230 b;655 120 300 183 272 r;667 258 345 267 303 r;679 228 354 258 300 b;691 141 264 204 258 b;703 204 270 207 240 r;715 165 438 231 420 r;727 357 432 423 426 k;739 372 516 393 420 b;751 261 456 363 399 b;763 273 474 333 360 b;775 231 390 273 333 b;787 219 312 267 272 k;799 249 300 261 270 r;811 258 420 270 402 r;823 354 462 398 400 k;835 363 486 399 417 r;847 351 482 408 432 r;859 417 482 426 429 k;871 399 474 429 462 r;883 426 528 450 468 b;895 339 462 342 450 b;907 273 408 339 387 r;919 354 408 372 384 b;931 312 375 321 336 r;943 324 378 336 369 r;955 342 408 366 375 b;967 339 462 366 396 r;979 297 430 351 390 b;991 339 387 345 354 r;1003 288 360 315 348 b;1015 273 324 312 324 b;1027 303 402 309 348 r;1039 231 384 270 348 b;1051 135 318 267 284 r;1063 204 291 219 282 b;1075 213 327 216 315 r;1087 279 360 297 318 b;1099 273 327 279 294 b`],
  [420, 540, `103 50 222 50 93 r;115 78 126 87 90 k;127 50 195 50 153 b;139 50 135 50 117 r;151 72 132 114 123 b;163 111 291 120 270 r;175 219 285 258 273 b;187 246 324 261 312 r;199 246 327 267 306 b;211 255 327 270 282 r;223 234 363 282 357 r;235 333 405 351 363 r;247 261 396 270 366 b;259 246 285 249 279 b;271 195 261 219 249 b;283 192 285 216 270 r;295 237 333 270 300 r;307 186 303 186 294 b;319 162 327 192 294 r;331 285 354 288 342 r;343 255 390 276 345 b;355 279 387 279 363 r;367 312 438 363 430 r;379 417 510 429 480 r;391 366 480 468 474 k;403 417 495 426 474 b;415 381 450 423 432 b;427 417 510 417 471 r;439 423 483 465 474 r;451 438 663 468 639 r;463 585 669 624 642 b;475 585 642 594 630 b;487 552 669 570 615 b;499 510 579 531 576 b;511 456 543 456 537 b;523 381 543 381 534 r;535 480 531 507 531 r;547 501 546 531 537 k;559 531 615 534 600 r;571 561 609 570 597 b;583 510 579 528 576 b;595 519 567 522 543 r;607 510 564 543 552 r;619 540 579 552 564 r;631 465 573 480 558 b;643 438 495 444 489 b;655 414 531 447 525 r;667 519 651 519 648 r;679 549 651 606 651 b;691 555 606 597 606 b;703 513 639 519 606 b;715 450 534 477 525 b;727 417 495 435 483 b;739 423 510 429 483 r;751 402 534 471 489 b;763 405 495 423 480 b;775 303 447 321 420 b;787 318 399 318 354 r;799 312 438 354 405 r;811 369 420 396 417 r;823 312 420 387 420 b;835 465 651 498 630 r;847 561 630 612 627 b;859 543 618 564 609 b;871 549 588 570 573 k;883 429 573 429 567 b;895 351 438 375 438 b;907 354 483 381 483 r;919 414 513 450 480 b;931 330 513 345 453 b;943 330 426 351 426 r;955 354 441 372 429 b;967 324 387 339 369 b;979 171 363 225 345 b;991 198 279 228 237 r;1003 150 249 204 240 b;1015 135 273 150 210 b;1027 69 198 153 156 k;1039 50 177 50 153 b;1051 50 144 50 114 r;1063 50 153 50 111 b;1147 50 102 50 70 r;1159 50 132 50 96 r;1171 50 132 50 105 b;1183 50 75 50 52 k;1195 50 75 50 52 k`]
];
const X0 = 194, Y0 = 102;
const third = v => Math.floor(v / 3);
const poly = (s, ox, oy) => s.split(' ').map(p => { const [x, y] = p.split(','); return (ox + x / 3).toFixed(1) + ',' + (oy + y / 3).toFixed(1); }).join(' ');

const level = (y, colour, dash, label) => {
  const ly = y - Y0 + 0.5;
  return `<line x1="0" x2="100%" y1="${ly}" y2="${ly}" stroke="${colour}" ${dash ? `stroke-dasharray="${dash}"` : ''}/>` +
    (label ? `<svg x="100%" y="${ly}" overflow="visible"><text x="-1" y="-3" text-anchor="end" fill="#fff">${label}</text></svg>` : '');
};
let s = level(164, '#0f0', '9 6 3 6') + level(188, '#c0c0c0') + level(227, '#fff', '', '61.8') + level(234, '#f00', '9 6 3 6') +
  level(255, '#000', '18 6') + level(330, '#fff', '', '50.0') + level(559, '#fff', '', '23.6') + level(763, '#fff', '', '0.0');
s += `<g transform="translate(${-X0} ${-Y0})">`;
for (const [ox, oy, rows] of sets) for (const row of rows.split(';')) {
  const p = row.split(' '), c = p[5];
  const x = ox + third(+p[0]), [h, l, t, b] = p.slice(1, 5).map(v => oy + Math.round(v / 3));
  s += `<rect x="${x}" y="${h}" width="1" height="${l - h}"/>`;
  s += `<rect x="${x - 1}" y="${t}" width="3" height="${Math.max(1, b - t)}"/>`;
  if (c !== 'k' && b - t > 2) s += `<rect x="${x}" y="${t + 1}" width="1" height="${b - t - 2}" fill="${c === 'b' ? '#4169e1' : '#f00'}"/>`;
}
s += `<polyline fill="none" stroke="#fff" shape-rendering="crispEdges" points="${poly('435,63 460,108 490,152 520,188 570,240 620,289 655,309 690,345 715,358 750,369 780,370 820,372 845,390 870,405 905,408 960,405 1000,386 1040,354 1065,330 1100,287 1130,258 1160,237 1195,214 1245,160 1300,105 1340,63 1352,48 1380,5', 420, 540)} ${poly('97,1260 140,1170 190,1095 220,1045 285,975 320,910 360,845 405,778 432,764 480,705 510,667 550,636 575,605 620,568 645,537 665,522 700,489 745,478 765,469 800,446 830,442 885,440 940,428 990,420 1050,400 1097,381', 860, 95)}"/>
<g shape-rendering="crispEdges"><path d="M300 515L677 763" stroke="#f00" stroke-dasharray="3 4"/>
<path d="M194 134L353 102M1082.500 134.500L1242.500 235" stroke="#ff0" stroke-width="2"/></g>
<path d="M1227 102h10l-5 5zM194 783v6h6z" fill="#c0c0c0"/><path d="M197 107h7l-3.500 4z"/>
<text x="210" y="113">AUDUSD,H4&#160; 0.7566 0.7570 0.7558 0.7569</text>
<text x="204" y="136" fill="#ff0" style="font:13px 'Open Sans'">Spread: 4 points.</text>
<text x="200" y="162">#1771460508 buy 0.01</text></g>`;
document.getElementById('plot').innerHTML = s;

// Price scale: one label each 25 points, then the boxed current prices.
let a = '';
for (let i = 0; i < 20; i++) {
  const y = Math.round(117 + i * 35.04) - Y0 + 1;
  if (i === 2) continue;
  a += `<path d="M0 ${y + .5}h3" stroke="#000"/><text x="5" y="${y + 4}">${(0.762 - i * 0.0025).toFixed(4)}</text>`;
}
for (const [y, t] of [[188, '0.7569'], [254, '0.7521']]) {
  a += `<rect x="1" y="${y - Y0 - 4}" width="36" height="11"/><text x="5" y="${y - Y0 + 5}" fill="#8c8c8c">${t}</text>`;
}
document.getElementById('prices').innerHTML = a;

document.getElementById('times').innerHTML = ['1 Dec 2016', '6 Dec 12:00', '9 Dec 04:00', '13 Dec 20:00', '16 Dec 12:00', '21 Dec 04:00', '23 Dec 20:00', '28 Dec 12:00', '2 Jan 16:00', '5 Jan 08:00', '10 Jan 00:00', '12 Jan 16:00', '17 Jan 08:00', '20 Jan 00:00', '24 Jan 16:00', '27 Jan 08:00', '1 Feb 00:00']
  .map((t, i) => `<path d="M${i * 64 + 1.5} 0v3" stroke="#000"/><text x="${i * 64}" y="12">${t}</text>`).join('');

// Tick chart of the order window.
const zig = '379,354 382,316 386,354 389,300 391,277 394,316 397,277 400,316 403,277 406,316 409,256 412,235 415,277 418,235 421,256 424,316 428,354 433,277 437,316 440,375 443,354 446,397 449,375 452,436 455,397 460,475 464,436 467,397 470,436 473,397 476,436 479,397 482,436 485,397 488,436 491,397 494,456 497,475 503,475 506,436 509,475 512,436 515,475 518,417 521,397 524,417';
const ox = -124, oy = 190 - 226;
let k = '';
for (let i = 1; i < 8; i++) k += `<path d="M${2.5 + i * 32} 3V321"/>`;
for (let i = 0; i < 9; i++) k += `<path d="M2 ${32.5 + i * 32}H256"/>`;
k = `<g stroke="#c0c0c0" stroke-dasharray="5 5">${k}</g>`;
['0.7588', '0.7585', '0.7583', '0.7580', '0.7578', '0.7576', '0.7573', '0.7571', '0.7568', '0.7566'].forEach((t, i) => {
  const y = Math.min(32 + i * 32, 317);
  k += `<path d="M256 ${y + .5}h2" stroke="#000"/><text x="262" y="${y + 4}">${t}</text>`;
});
k += `<g fill="none" shape-rendering="crispEdges"><polyline stroke="#0060ff" points="${poly(zig, ox, oy + 53.5)} 51,160 51,219 51.5,282.5 256,282.5"/>`;
k += `<polyline stroke="#ff6060" points="${poly(zig, ox, oy)} 51.5,228.5 256,228.5"/></g>`;
k += '<rect x="1.5" y="2.5" width="255" height="318" fill="none" stroke="#000"/><text x="5" y="12">AUDUSD</text>';
k += '<rect x="258" y="223" width="36" height="11" fill="#ff6060"/><text x="262" y="232" fill="#fff">0.7573</text>';
k += '<rect x="258" y="277" width="36" height="11" fill="#0060ff"/><text x="262" y="286" fill="#fff">0.7569</text>';
document.getElementById('tick').innerHTML = k;
```
